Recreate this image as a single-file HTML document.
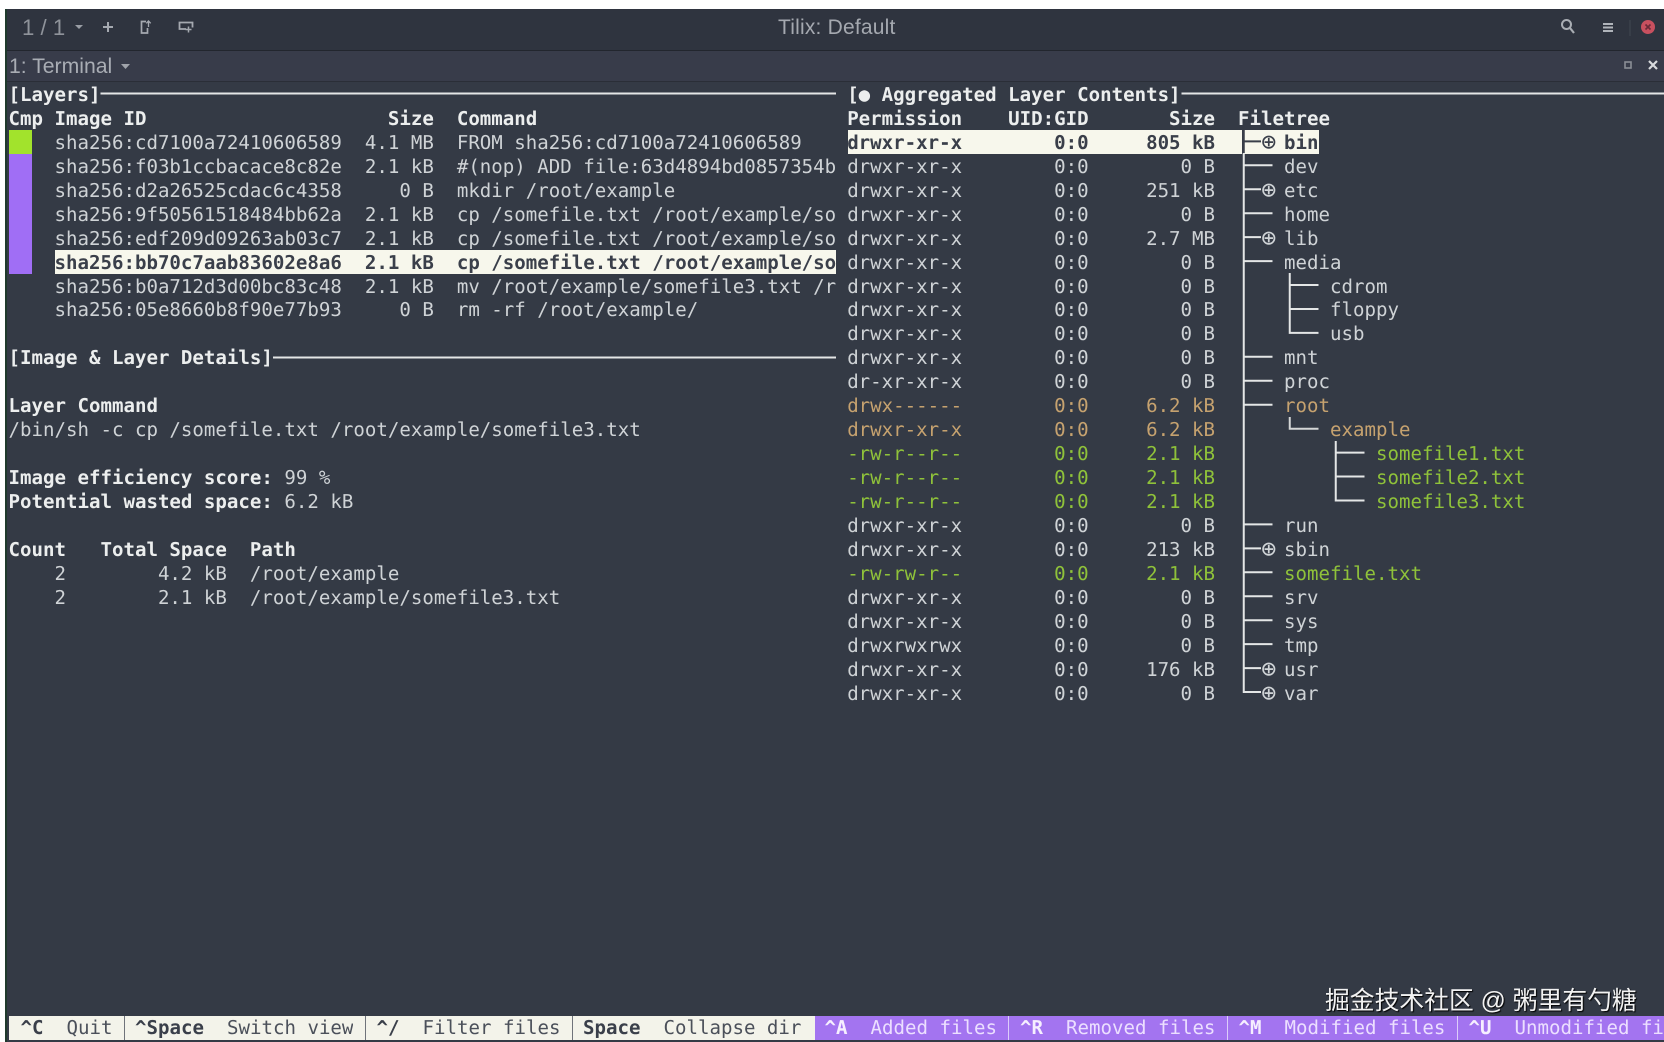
<!DOCTYPE html>
<html lang="en">
<head>
<meta charset="utf-8">
<title>Tilix: Default</title>
<style>
html,body{margin:0;padding:0;width:1664px;height:1042px;overflow:hidden;background:#fff}
#app{position:absolute;left:5px;top:9px;width:1659px;height:1033px;background:#343a45}
#edge{position:absolute;left:5px;top:9px;width:2px;height:1033px;background:#1f3a2c}
#title{position:absolute;left:7px;top:9px;width:1657px;height:41px;background:#2f343f;border-bottom:1px solid #22262e}
#tabs{position:absolute;left:7px;top:51px;width:1657px;height:30px;background:#383c4a;border-bottom:1px solid #2a2e37}
.ui{position:absolute;font-family:"Liberation Sans","DejaVu Sans",sans-serif;color:#9a9ea6;white-space:pre;line-height:24px}
pre{position:absolute;margin:0;font-family:"DejaVu Sans Mono","Liberation Mono",monospace;font-size:19.1px;line-height:23.94px;height:23.94px;color:#cfd3d6;white-space:pre;text-rendering:geometricPrecision;top:calc(83px + 23.94px * var(--r));overflow:hidden}
.l{left:8.5px;width:828px}
.rp{left:847.2px;width:816.8px}
b{font-weight:700;color:#eceeee}
.hl,.hl b{color:#3a3f4a}
.y{color:#c6a26f}
.g{color:#8fc23a}
.box{position:absolute}
.sep{position:absolute;top:1016px;width:1px;height:24px}
.o{display:inline-block;width:15px;margin:0 -1.75px;font-size:25px;line-height:0;position:relative;top:1.500px;left:2px;font-weight:400}
pre.bw{color:#4b505a;top:1015.5px;z-index:3}
pre.bw b{color:#3a3f4a}
pre.bp{color:#ecdfff;top:1015.5px;z-index:3}
pre.bp b{color:#f6efff}
#wm{position:absolute;left:1325px;top:985px;font-family:"Liberation Sans","Noto Sans CJK SC",sans-serif;font-size:24.8px;line-height:34px;color:#f2f2f2;text-shadow:1px 1px 1px #000;white-space:pre;z-index:5}
svg{position:absolute;left:0;top:0}
</style>
</head>
<body>
<div id="app"></div>
<div id="edge"></div>
<div id="title"></div>
<div id="tabs"></div>

<div class="ui" style="left:22px;top:16px;font-size:22.200px;color:#8f939a">1 / 1</div>
<div class="ui" style="left:778px;top:16px;font-size:21px;letter-spacing:.2px;color:#a5a9b0">Tilix: Default</div>
<div class="ui" style="left:9px;top:54.500px;font-size:21.200px;color:#a9adb4">1: Terminal</div>

<svg width="1664" height="1042" viewBox="0 0 1664 1042" style="z-index:2">
  <!-- header icons -->
  <path d="M75 25h8l-4 4z" fill="#9a9ea5"/>
  <path d="M108 22v10M103 27h10" stroke="#a5a9b0" stroke-width="2" fill="none"/>
  <path d="M146 21.500h-4.500v11.500h6V28" stroke="#a5a9b0" stroke-width="1.700" fill="none"/>
  <path d="M148.500 27v-6M146.300 23.300l2.200-2.300 2.200 2.300" stroke="#a5a9b0" stroke-width="1.300" fill="none"/>
  <path d="M186 29h-6.500v-6.500h13v5" stroke="#a5a9b0" stroke-width="1.800" fill="none"/>
  <path d="M188.500 32.500v-6M185.500 29.500h6" stroke="#a5a9b0" stroke-width="1.500" fill="none"/>
  <path d="M121 64h9l-4.500 5z" fill="#a0a4ab"/>
  <circle cx="1566.500" cy="24.500" r="4.500" stroke="#a9adb3" stroke-width="2" fill="none"/>
  <path d="M1570 28l4 5" stroke="#a9adb3" stroke-width="2.200" fill="none"/>
  <path d="M1603 24h10M1603 27.500h10M1603 31h10" stroke="#b0b4ba" stroke-width="2" fill="none"/>
  <path d="M1630 20v16" stroke="#3c414c" stroke-width="1.500"/>
  <circle cx="1648" cy="27" r="7" fill="#c8505f"/>
  <path d="M1645.500 24.500l5 5M1650.500 24.500l-5 5" stroke="#6b2a38" stroke-width="1.600"/>
  <rect x="1625" y="62" width="6" height="6" fill="none" stroke="#8a8e96" stroke-width="1.600"/>
  <path d="M1649 61l8 8M1657 61l-8 8" stroke="#d8dadd" stroke-width="2.200"/>

  <!-- section lines -->
  <path d="M100.500 93.500H836M273 357.500H836M1181.500 93.500H1664" stroke="#e4e6e6" stroke-width="2" fill="none"/>
</svg>

<!-- highlights -->
<div class="box" style="left:8.500px;top:129.500px;width:23px;height:24px;background:#a2e32c"></div>
<div class="box" style="left:8.500px;top:153.500px;width:23px;height:120px;background:#a06ef5"></div>
<div class="box" style="left:54.500px;top:249.500px;width:781.500px;height:24px;background:#f7f7ec"></div>
<div class="box" style="left:847.500px;top:129.500px;width:394px;height:24px;background:#f7f7ec"></div>
<div class="box" style="left:1244px;top:129.500px;width:74.500px;height:24px;background:#f7f7ec"></div>

<svg width="1664" height="1042" viewBox="0 0 1664 1042" style="z-index:2">
  <g transform="translate(-1,0)">
  <path d="M1244.750 153V692H1262M1244.750 165.300H1273.500M1244.750 189.300H1262M1244.750 213.200H1273.500M1244.750 237.100H1262M1244.750 261.100H1273.500M1244.750 356.800H1273.500M1244.750 380.800H1273.500M1244.750 404.700H1273.500M1244.750 524.400H1273.500M1244.750 548.400H1262M1244.750 572.300H1273.500M1244.750 596.200H1273.500M1244.750 620.200H1273.500M1244.750 644.100H1273.500M1244.750 668.100H1262" stroke="#e4e6e6" stroke-width="2" fill="none"/>
  <path d="M1290.750 273V332.900H1319.500M1290.750 285H1319.500M1290.750 309H1319.500" stroke="#e4e6e6" stroke-width="2" fill="none"/>
  <path d="M1290.750 417V428.700H1319.500" stroke="#d4d6d6" stroke-width="2" fill="none"/>
  <path d="M1336.750 441V500.500H1365.500M1336.750 452.600H1365.500M1336.750 476.500H1365.500" stroke="#e4e6e6" stroke-width="2" fill="none"/>
  <path d="M1244.750 130V153M1244.750 141.400H1262" stroke="#3a3f4a" stroke-width="2" fill="none"/>
  </g>
</svg>

<!-- left pane -->
<pre class="l" style="--r:0;margin-top:-.5px"><b>[Layers]</b></pre>
<pre class="l" style="--r:1"><b>Cmp Image ID                     Size  Command</b></pre>
<pre class="l" style="--r:2">    sha256:cd7100a72410606589  4.1 MB  FROM sha256:cd7100a72410606589</pre>
<pre class="l" style="--r:3">    sha256:f03b1ccbacace8c82e  2.1 kB  #(nop) ADD file:63d4894bd0857354b</pre>
<pre class="l" style="--r:4">    sha256:d2a26525cdac6c4358     0 B  mkdir /root/example</pre>
<pre class="l" style="--r:5">    sha256:9f50561518484bb62a  2.1 kB  cp /somefile.txt /root/example/so</pre>
<pre class="l" style="--r:6">    sha256:edf209d09263ab03c7  2.1 kB  cp /somefile.txt /root/example/so</pre>
<pre class="l hl" style="--r:7"><b>    sha256:bb70c7aab83602e8a6  2.1 kB  cp /somefile.txt /root/example/so</b></pre>
<pre class="l" style="--r:8">    sha256:b0a712d3d00bc83c48  2.1 kB  mv /root/example/somefile3.txt /r</pre>
<pre class="l" style="--r:9">    sha256:05e8660b8f90e77b93     0 B  rm -rf /root/example/</pre>
<pre class="l" style="--r:11"><b>[Image &amp; Layer Details]</b></pre>
<pre class="l" style="--r:13"><b>Layer Command</b></pre>
<pre class="l" style="--r:14">/bin/sh -c cp /somefile.txt /root/example/somefile3.txt</pre>
<pre class="l" style="--r:16"><b>Image efficiency score:</b> 99 %</pre>
<pre class="l" style="--r:17"><b>Potential wasted space:</b> 6.2 kB</pre>
<pre class="l" style="--r:19"><b>Count   Total Space  Path</b></pre>
<pre class="l" style="--r:20">    2        4.2 kB  /root/example</pre>
<pre class="l" style="--r:21">    2        2.1 kB  /root/example/somefile3.txt</pre>

<!-- right pane -->
<pre class="rp" style="--r:0;margin-top:-.5px"><b>[● Aggregated Layer Contents]</b></pre>
<pre class="rp" style="--r:1"><b>Permission    UID:GID       Size  Filetree</b></pre>
<pre class="rp hl" style="--r:2"><b>drwxr-xr-x        0:0     805 kB    <span class="o">⊕</span> bin</b></pre>
<pre class="rp" style="--r:3">drwxr-xr-x        0:0        0 B      dev</pre>
<pre class="rp" style="--r:4">drwxr-xr-x        0:0     251 kB    <span class="o">⊕</span> etc</pre>
<pre class="rp" style="--r:5">drwxr-xr-x        0:0        0 B      home</pre>
<pre class="rp" style="--r:6">drwxr-xr-x        0:0     2.7 MB    <span class="o">⊕</span> lib</pre>
<pre class="rp" style="--r:7">drwxr-xr-x        0:0        0 B      media</pre>
<pre class="rp" style="--r:8">drwxr-xr-x        0:0        0 B          cdrom</pre>
<pre class="rp" style="--r:9">drwxr-xr-x        0:0        0 B          floppy</pre>
<pre class="rp" style="--r:10">drwxr-xr-x        0:0        0 B          usb</pre>
<pre class="rp" style="--r:11">drwxr-xr-x        0:0        0 B      mnt</pre>
<pre class="rp" style="--r:12">dr-xr-xr-x        0:0        0 B      proc</pre>
<pre class="rp y" style="--r:13">drwx------        0:0     6.2 kB      root</pre>
<pre class="rp y" style="--r:14">drwxr-xr-x        0:0     6.2 kB          example</pre>
<pre class="rp g" style="--r:15">-rw-r--r--        0:0     2.1 kB              somefile1.txt</pre>
<pre class="rp g" style="--r:16">-rw-r--r--        0:0     2.1 kB              somefile2.txt</pre>
<pre class="rp g" style="--r:17">-rw-r--r--        0:0     2.1 kB              somefile3.txt</pre>
<pre class="rp" style="--r:18">drwxr-xr-x        0:0        0 B      run</pre>
<pre class="rp" style="--r:19">drwxr-xr-x        0:0     213 kB    <span class="o">⊕</span> sbin</pre>
<pre class="rp g" style="--r:20">-rw-rw-r--        0:0     2.1 kB      somefile.txt</pre>
<pre class="rp" style="--r:21">drwxr-xr-x        0:0        0 B      srv</pre>
<pre class="rp" style="--r:22">drwxr-xr-x        0:0        0 B      sys</pre>
<pre class="rp" style="--r:23">drwxrwxrwx        0:0        0 B      tmp</pre>
<pre class="rp" style="--r:24">drwxr-xr-x        0:0     176 kB    <span class="o">⊕</span> usr</pre>
<pre class="rp" style="--r:25">drwxr-xr-x        0:0        0 B    <span class="o">⊕</span> var</pre>

<div id="wm">掘金技术社区 @ 粥里有勺糖</div>

<!-- bottom bar -->
<div class="box" style="left:9px;top:1016px;width:806px;height:24px;background:#f3f3ea"></div>
<div class="box" style="left:815px;top:1016px;width:849px;height:24px;background:#a374f0"></div>
<div class="sep" style="left:124px;background:#6f737a"></div>
<div class="sep" style="left:365px;background:#6f737a"></div>
<div class="sep" style="left:572px;background:#6f737a"></div>
<div class="sep" style="left:1008px;background:#dccdfa"></div>
<div class="sep" style="left:1227px;background:#dccdfa"></div>
<div class="sep" style="left:1457px;background:#dccdfa"></div>

<pre class="bw" style="left:20.500px"><b>^C</b>  Quit</pre>
<pre class="bw" style="left:135px"><b>^Space</b>  Switch view</pre>
<pre class="bw" style="left:376.500px"><b>^/</b>  Filter files</pre>
<pre class="bw" style="left:583px"><b>Space</b>  Collapse dir</pre>
<pre class="bp" style="left:824.500px"><b>^A</b>  Added files</pre>
<pre class="bp" style="left:1020px"><b>^R</b>  Removed files</pre>
<pre class="bp" style="left:1238.500px"><b>^M</b>  Modified files</pre>
<pre class="bp" style="left:1468.500px"><b>^U</b>  Unmodified fi</pre>
</body>
</html>
